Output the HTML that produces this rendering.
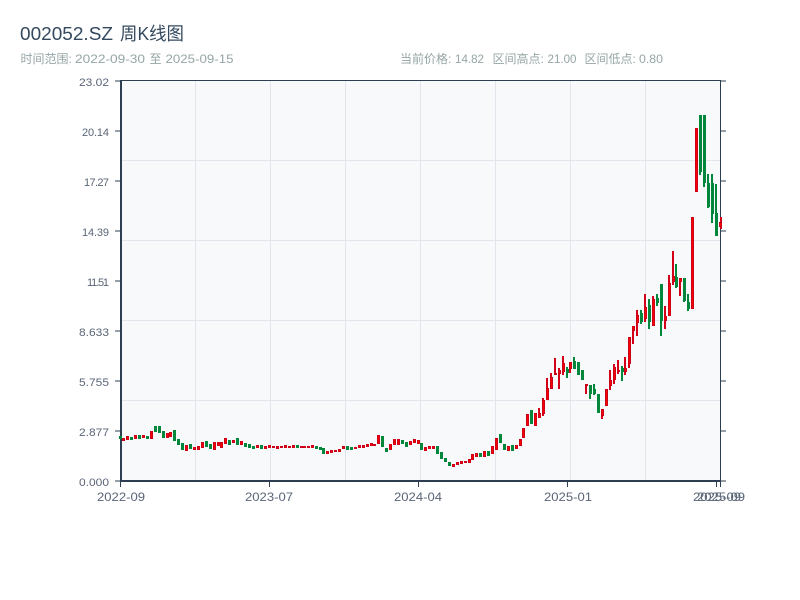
<!DOCTYPE html>
<html><head><meta charset="utf-8"><style>
html,body{margin:0;padding:0;background:#fff}
body{width:800px;height:600px;overflow:hidden;position:relative}
svg{position:absolute;left:0;top:0}
text{font-family:"Liberation Sans","Noto Sans CJK SC",sans-serif}
.y text{font-size:11px;fill:#5a6577}
.x text{font-size:12px;fill:#5a6577}
.s text{font-size:12px;fill:#95a5a6}
</style></head><body>
<svg width="800" height="600" viewBox="0 0 800 600">
<g font-size="18" fill="#34495e">
<text x="20" y="40" textLength="93" lengthAdjust="spacingAndGlyphs">002052.SZ</text>
<text x="120" y="40" textLength="64" lengthAdjust="spacingAndGlyphs">周K线图</text>
</g>
<g class="s">
<text x="20.5" y="63">时间范围:</text>
<text x="75" y="63" textLength="70" lengthAdjust="spacingAndGlyphs">2022-09-30</text>
<text x="149.5" y="63">至</text>
<text x="165.5" y="63" textLength="68" lengthAdjust="spacingAndGlyphs">2025-09-15</text>
<text x="400" y="63">当前价格:</text>
<text x="455" y="63" textLength="29" lengthAdjust="spacingAndGlyphs">14.82</text>
<text x="492.5" y="63">区间高点:</text>
<text x="547.5" y="63" textLength="29" lengthAdjust="spacingAndGlyphs">21.00</text>
<text x="584.5" y="63">区间低点:</text>
<text x="639" y="63" textLength="24" lengthAdjust="spacingAndGlyphs">0.80</text>
</g>
<rect x="121" y="81" width="600" height="400" fill="#f8f9fa"/>
<path d="M195.5 81V481M270.5 81V481M345.5 81V481M420.5 81V481M495.5 81V481M570.5 81V481M645.5 81V481M121 160.5H720M121 240.5H720M121 320.5H720M121 400.5H720" stroke="#e2e5ec" stroke-width="1" fill="none"/>
<path d="M121 80.5H721M720.5 80V481" stroke="#2c3e50" stroke-width="1" fill="none"/>
<path d="M121 80V482M120 481H721" stroke="#2c3e50" stroke-width="2" fill="none"/>
<path d="M115 81H120M115 131H120M115 181H120M115 231H120M115 281H120M115 331H120M115 381H120M115 431H120M115 481H120M721 81H726M721 131H726M721 181H726M721 231H726M721 281H726M721 331H726M721 381H726M721 431H726M721 481H726M120.5 482V487M269.5 482V487M418.5 482V487M567.5 482V487M716.5 482V487M720.5 482V487" stroke="#2c3e50" stroke-width="1" fill="none"/>
<g transform="translate(-.5 0)">
<path fill="none" stroke="#d4001a" stroke-width="2" d="M539.5 408V418M543.5 398V416M547.5 378V400M551.5 373V389M555.5 358V375M559.5 368V389M563.5 356V375M570.5 362V373M586.5 384V394M602.5 409V419M610.5 370V390M614.5 364V384M618.5 360V374M625.5 357V375M629.5 337V368M633.5 326V344M637.5 310V336M645.5 294V322M653.5 296V326M665.5 306V329M669.5 275V316M673.5 251V285M680.5 278V296M721.5 217V229"/>
<path fill="none" stroke="#00873c" stroke-width="2" d="M567.5 367V378M574.5 357V369M590.5 385V399M594.5 384V395M622.5 366V381M641.5 310V324M649.5 299V329M657.5 294V306M661.5 284V336M676.5 264V288M684.5 278V302M688.5 294V311M700.5 115V175M704.5 115V187M708.5 174V208M712.5 174V223M716.5 184V236"/>
</g>
<path fill="#f00" stroke="#cc0018" stroke-width="1" d="M122.5 438.5h2V440.5h-2zM126.5 436.5h2V439.5h-2zM134.5 435.5h2V438.5h-2zM142.5 435.5h2V437.5h-2zM150.5 431.5h2V438.5h-2zM166.5 433.5h2V437.5h-2zM169.5 432.5h2V436.5h-2zM185.5 445.5h2V450.5h-2zM193.5 447.5h2V449.5h-2zM197.5 446.5h2V449.5h-2zM201.5 442.5h2V447.5h-2zM213.5 442.5h2V449.5h-2zM217.5 442.5h2V445.5h-2zM220.5 442.5h2V447.5h-2zM224.5 438.5h2V443.5h-2zM232.5 440.5h2V442.5h-2zM240.5 441.5h2V444.5h-2zM256.5 445.5h2V447.5h-2zM264.5 446.5h2V448.5h-2zM268.5 445.5h2V447.5h-2zM272.5 446.5h2V447.5h-2zM276.5 446.5h2V448.5h-2zM280.5 446.5h2V447.5h-2zM284.5 445.5h2V447.5h-2zM288.5 446.5h2V447.5h-2zM292.5 445.5h2V447.5h-2zM300.5 446.5h2V447.5h-2zM303.5 446.5h2V447.5h-2zM307.5 446.5h2V447.5h-2zM311.5 445.5h2V447.5h-2zM326.5 451.5h2V453.5h-2zM330.5 450.5h2V452.5h-2zM334.5 450.5h2V451.5h-2zM338.5 449.5h2V451.5h-2zM342.5 446.5h2V448.5h-2zM354.5 447.5h2V448.5h-2zM358.5 445.5h2V447.5h-2zM362.5 445.5h2V447.5h-2zM366.5 444.5h2V446.5h-2zM370.5 443.5h2V445.5h-2zM373.5 444.5h2V445.5h-2zM377.5 435.5h2V443.5h-2zM389.5 444.5h2V449.5h-2zM393.5 439.5h2V444.5h-2zM397.5 439.5h2V444.5h-2zM409.5 441.5h2V444.5h-2zM413.5 439.5h2V442.5h-2zM417.5 440.5h2V443.5h-2zM424.5 447.5h2V450.5h-2zM428.5 446.5h2V448.5h-2zM432.5 446.5h2V448.5h-2zM452.5 464.5h2V466.5h-2zM456.5 462.5h2V464.5h-2zM460.5 461.5h2V463.5h-2zM464.5 461.5h2V462.5h-2zM468.5 459.5h2V462.5h-2zM471.5 454.5h2V459.5h-2zM475.5 453.5h2V456.5h-2zM483.5 451.5h2V456.5h-2zM491.5 446.5h2V453.5h-2zM495.5 438.5h2V449.5h-2zM507.5 446.5h2V450.5h-2zM515.5 445.5h2V448.5h-2zM519.5 439.5h2V445.5h-2zM522.5 428.5h2V437.5h-2zM526.5 414.5h2V425.5h-2zM534.5 413.5h2V425.5h-2zM538.5 413.5h2V417.5h-2zM542.5 400.5h2V413.5h-2zM546.5 388.5h2V399.5h-2zM550.5 377.5h2V388.5h-2zM554.5 373.5h2V374.5h-2zM558.5 370.5h2V373.5h-2zM562.5 363.5h2V371.5h-2zM569.5 362.5h2V368.5h-2zM585.5 384.5h2V385.5h-2zM601.5 409.5h2V415.5h-2zM605.5 389.5h2V405.5h-2zM609.5 380.5h2V385.5h-2zM613.5 367.5h2V379.5h-2zM617.5 370.5h2V371.5h-2zM624.5 368.5h2V371.5h-2zM628.5 337.5h2V363.5h-2zM632.5 326.5h2V330.5h-2zM636.5 315.5h2V322.5h-2zM644.5 307.5h2V318.5h-2zM652.5 299.5h2V325.5h-2zM664.5 316.5h2V320.5h-2zM668.5 283.5h2V315.5h-2zM672.5 276.5h2V281.5h-2zM679.5 278.5h2V281.5h-2zM691.5 217.5h2V308.5h-2zM695.5 128.5h2V191.5h-2zM719.5 222.5h2V226.5h-2z"/>
<path fill="#00873c" stroke="#00873c" stroke-width="1" d="M119.5 436.5h2V438.5h-2zM130.5 437.5h2V439.5h-2zM138.5 435.5h2V438.5h-2zM146.5 436.5h2V438.5h-2zM154.5 426.5h2V431.5h-2zM158.5 426.5h2V432.5h-2zM162.5 431.5h2V437.5h-2zM173.5 430.5h2V440.5h-2zM177.5 439.5h2V444.5h-2zM181.5 443.5h2V449.5h-2zM189.5 444.5h2V448.5h-2zM205.5 441.5h2V446.5h-2zM209.5 444.5h2V448.5h-2zM228.5 440.5h2V444.5h-2zM236.5 438.5h2V444.5h-2zM244.5 443.5h2V446.5h-2zM248.5 444.5h2V447.5h-2zM252.5 446.5h2V448.5h-2zM260.5 445.5h2V448.5h-2zM296.5 445.5h2V447.5h-2zM315.5 446.5h2V448.5h-2zM319.5 447.5h2V449.5h-2zM322.5 448.5h2V453.5h-2zM346.5 446.5h2V449.5h-2zM350.5 447.5h2V449.5h-2zM381.5 436.5h2V446.5h-2zM385.5 448.5h2V451.5h-2zM401.5 440.5h2V443.5h-2zM405.5 442.5h2V446.5h-2zM420.5 443.5h2V449.5h-2zM436.5 446.5h2V453.5h-2zM440.5 452.5h2V458.5h-2zM444.5 458.5h2V461.5h-2zM448.5 462.5h2V465.5h-2zM479.5 453.5h2V456.5h-2zM487.5 451.5h2V455.5h-2zM499.5 434.5h2V442.5h-2zM503.5 444.5h2V449.5h-2zM511.5 445.5h2V450.5h-2zM530.5 410.5h2V423.5h-2zM566.5 369.5h2V372.5h-2zM573.5 361.5h2V368.5h-2zM577.5 362.5h2V374.5h-2zM581.5 370.5h2V379.5h-2zM589.5 385.5h2V393.5h-2zM593.5 389.5h2V393.5h-2zM597.5 394.5h2V412.5h-2zM621.5 368.5h2V371.5h-2zM640.5 313.5h2V321.5h-2zM648.5 305.5h2V321.5h-2zM656.5 298.5h2V302.5h-2zM660.5 284.5h2V320.5h-2zM675.5 277.5h2V286.5h-2zM683.5 278.5h2V300.5h-2zM687.5 302.5h2V308.5h-2zM699.5 115.5h2V171.5h-2zM703.5 115.5h2V182.5h-2zM707.5 183.5h2V206.5h-2zM711.5 183.5h2V213.5h-2zM715.5 213.5h2V235.5h-2z"/>
<g class="y">
<text x="79" y="86" textLength="30" lengthAdjust="spacingAndGlyphs">23.02</text>
<text x="82" y="136" textLength="27" lengthAdjust="spacing">20.14</text>
<text x="84" y="186" textLength="25" lengthAdjust="spacing">17.27</text>
<text x="82" y="236" textLength="27" lengthAdjust="spacing">14.39</text>
<text x="87" y="286" textLength="22" lengthAdjust="spacing">11.51</text>
<text x="79" y="336" textLength="30" lengthAdjust="spacingAndGlyphs">8.633</text>
<text x="79" y="386" textLength="30" lengthAdjust="spacingAndGlyphs">5.755</text>
<text x="79" y="436" textLength="30" lengthAdjust="spacingAndGlyphs">2.877</text>
<text x="79" y="486" textLength="30" lengthAdjust="spacingAndGlyphs">0.000</text>
</g>
<g class="x">
<text x="97" y="501" textLength="48" lengthAdjust="spacingAndGlyphs">2022-09</text>
<text x="245" y="501" textLength="48" lengthAdjust="spacingAndGlyphs">2023-07</text>
<text x="394" y="501" textLength="48" lengthAdjust="spacingAndGlyphs">2024-04</text>
<text x="544" y="501" textLength="48" lengthAdjust="spacingAndGlyphs">2025-01</text>
<text x="693" y="501" textLength="48" lengthAdjust="spacingAndGlyphs">2025-09</text>
<text x="697" y="501" textLength="48" lengthAdjust="spacingAndGlyphs">2025-09</text>
</g>
</svg>
</body></html>
